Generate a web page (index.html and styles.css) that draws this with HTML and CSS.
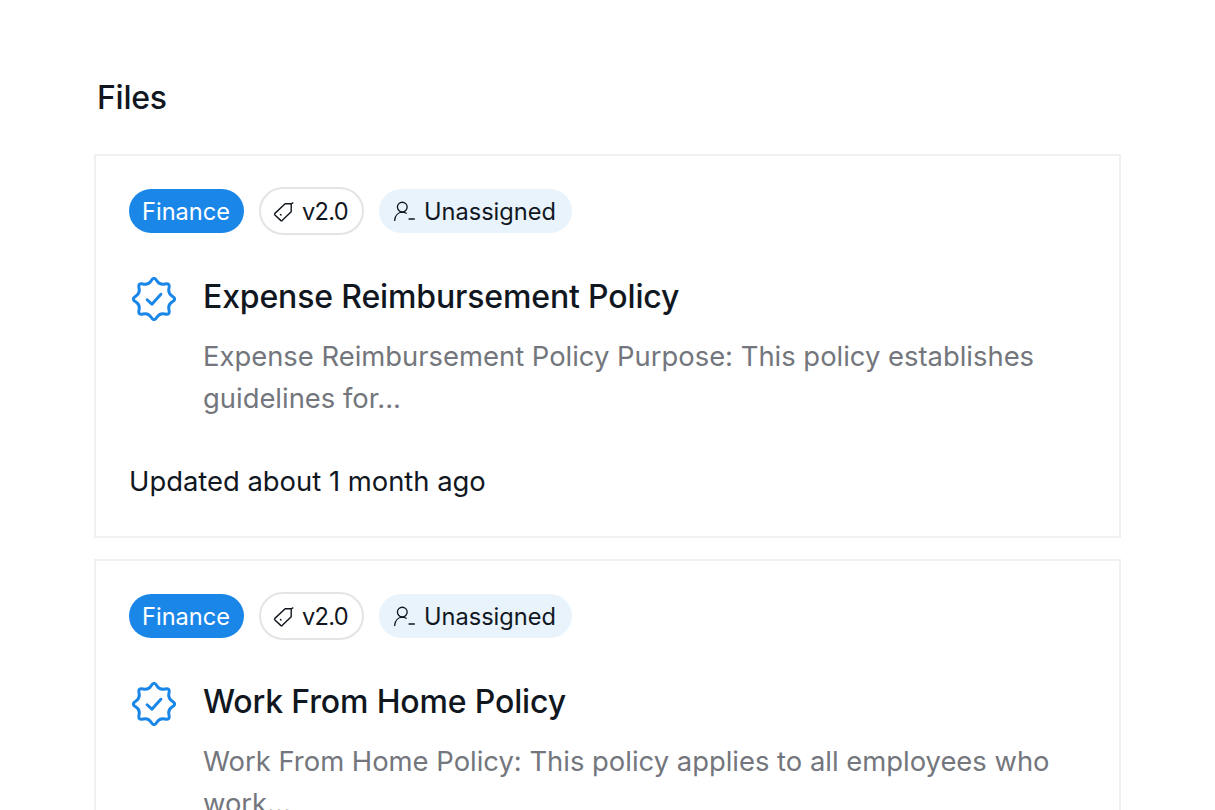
FILE: index.html
```html
<!DOCTYPE html>
<html lang="en">

<head>
  <meta charset="UTF-8">
  <meta name="viewport" content="width=device-width, initial-scale=1.0">
  <title>Files</title>
  <link rel="stylesheet" href="styles.css">
</head>

<body>
  <main class="files">
    <h1 class="files-title">Files</h1>

    <article class="file-card">
      <div class="tags">
        <span class="tag tag-category">Finance</span>
        <span class="tag tag-version">
          <svg class="tag-icon" viewBox="1 1 18 18" fill="none" stroke="currentColor" stroke-width="1.2" stroke-linejoin="round" stroke-linecap="round">
            <path d="M18 2.6 L16.6 3.4 H11.4 L2.6 11.6 Q2 12.3 2.6 13 L7.6 17.6 Q8.3 18.2 9 17.6 L16.6 10.2 V3.4" />
            <path d="M7.4 12.6 L7.9 13.1" />
          </svg>
          v2.0
        </span>
        <span class="tag tag-owner">
          <svg class="tag-icon" viewBox="1 1 19 18" fill="none" stroke="currentColor" stroke-width="1.2" stroke-linecap="round">
            <circle cx="8.5" cy="6" r="4.4" />
            <path d="M1.6 18 C2 13.5 5 10.8 8.5 10.6 C10 10.6 11 11 12 11.6" />
            <path d="M14.6 16.8 H19.4" />
          </svg>
          Unassigned
        </span>
      </div>
      <div class="file-main">
        <svg class="verified" viewBox="0 0 46 46" fill="none" stroke="#1a87e8" stroke-width="3.1" stroke-linecap="round" stroke-linejoin="round">
          <path d="M20.04 3.84 Q23 -1 25.97 3.84 Q28.93 8.68 34.45 7.36 Q39.97 6.03 38.65 11.55 Q37.32 17.07 42.16 20.04 Q47 23 42.16 25.97 Q37.32 28.93 38.65 34.45 Q39.97 39.97 34.45 38.65 Q28.93 37.32 25.97 42.16 Q23 47 20.04 42.16 Q17.07 37.32 11.55 38.65 Q6.03 39.97 7.36 34.45 Q8.68 28.93 3.84 25.97 Q-1 23 3.84 20.04 Q8.68 17.07 7.36 11.55 Q6.03 6.03 11.55 7.36 Q17.07 8.68 20.04 3.84 Z" />
          <path d="M15.8 23.8 L20.8 28.4 L30.2 18" />
        </svg>
        <div class="file-text">
          <h2 class="file-name">Expense Reimbursement Policy</h2>
          <p class="file-desc">Expense Reimbursement Policy Purpose: This policy establishes guidelines for...</p>
        </div>
      </div>
      <p class="file-updated">Updated about 1 month ago</p>
    </article>

    <article class="file-card">
      <div class="tags">
        <span class="tag tag-category">Finance</span>
        <span class="tag tag-version">
          <svg class="tag-icon" viewBox="1 1 18 18" fill="none" stroke="currentColor" stroke-width="1.2" stroke-linejoin="round" stroke-linecap="round">
            <path d="M18 2.6 L16.6 3.4 H11.4 L2.6 11.6 Q2 12.3 2.6 13 L7.6 17.6 Q8.3 18.2 9 17.6 L16.6 10.2 V3.4" />
            <path d="M7.4 12.6 L7.9 13.1" />
          </svg>
          v2.0
        </span>
        <span class="tag tag-owner">
          <svg class="tag-icon" viewBox="1 1 19 18" fill="none" stroke="currentColor" stroke-width="1.2" stroke-linecap="round">
            <circle cx="8.5" cy="6" r="4.4" />
            <path d="M1.6 18 C2 13.5 5 10.8 8.5 10.6 C10 10.6 11 11 12 11.6" />
            <path d="M14.6 16.8 H19.4" />
          </svg>
          Unassigned
        </span>
      </div>
      <div class="file-main">
        <svg class="verified" viewBox="0 0 46 46" fill="none" stroke="#1a87e8" stroke-width="3.1" stroke-linecap="round" stroke-linejoin="round">
          <path d="M20.04 3.84 Q23 -1 25.97 3.84 Q28.93 8.68 34.45 7.36 Q39.97 6.03 38.65 11.55 Q37.32 17.07 42.16 20.04 Q47 23 42.16 25.97 Q37.32 28.93 38.65 34.45 Q39.97 39.97 34.45 38.65 Q28.93 37.32 25.97 42.16 Q23 47 20.04 42.16 Q17.07 37.32 11.55 38.65 Q6.03 39.97 7.36 34.45 Q8.68 28.93 3.84 25.97 Q-1 23 3.84 20.04 Q8.68 17.07 7.36 11.55 Q6.03 6.03 11.55 7.36 Q17.07 8.68 20.04 3.84 Z" />
          <path d="M15.8 23.8 L20.8 28.4 L30.2 18" />
        </svg>
        <div class="file-text">
          <h2 class="file-name">Work From Home Policy</h2>
          <p class="file-desc">Work From Home Policy: This policy applies to all employees who work...</p>
        </div>
      </div>
      <p class="file-updated">Updated about 1 month ago</p>
    </article>
  </main>
</body>

</html>
```

FILE: styles.css
```css
* {
  box-sizing: border-box;
}

html,
body {
  height: 100%;
}

body {
  margin: 0;
  overflow: hidden;
  background-color: #fff;
  color: #11171f;
  font-family: "Inter", "Liberation Sans", sans-serif;
}

.files {
  padding: 79px 94px 0;
}

.files-title {
  margin: 0 0 37px 3px;
  font-size: 32px;
  font-weight: 500;
  letter-spacing: -0.25px;
  line-height: 38px;
}

.file-card {
  height: 384px;
  margin-bottom: 21px;
  padding: 31px 33px 0;
  border: 2px solid #f0f0f0;
}

.tags {
  display: flex;
  align-items: center;
  gap: 15px;
}

.tag {
  display: flex;
  align-items: center;
  gap: 9px;
  height: 44px;
  padding: 0 16px 0 15px;
  border-radius: 22px;
  font-size: 23.6px;
}

.tag-category {
  padding: 0 14px 0 13px;
  background-color: #1a87e8;
  color: #fff;
}

.tag-version {
  gap: 8px;
  height: 48px;
  padding: 0 14px 0 12px;
  border: 2px solid #e4e4e4;
  border-radius: 24px;
  letter-spacing: -0.7px;
}

.tag-owner {
  background-color: #e8f3fc;
}

.tag-icon {
  width: 21px;
  height: 21px;
  flex: none;
}

.file-main {
  display: flex;
  gap: 27px;
  margin-top: 42px;
}

.verified {
  width: 44px;
  height: 44px;
  margin-left: 3px;
  flex: none;
}

.file-text {
  padding-top: 1px;
}

.file-name {
  margin: 0 0 19px;
  font-size: 32px;
  font-weight: 500;
  letter-spacing: -0.15px;
  line-height: 38px;
}

.file-desc {
  margin: 0;
  color: #73767c;
  font-size: 27.4px;
  line-height: 42px;
}

.file-updated {
  margin: 43px 0 0;
  font-size: 27.4px;
  line-height: 38px;
}
```
